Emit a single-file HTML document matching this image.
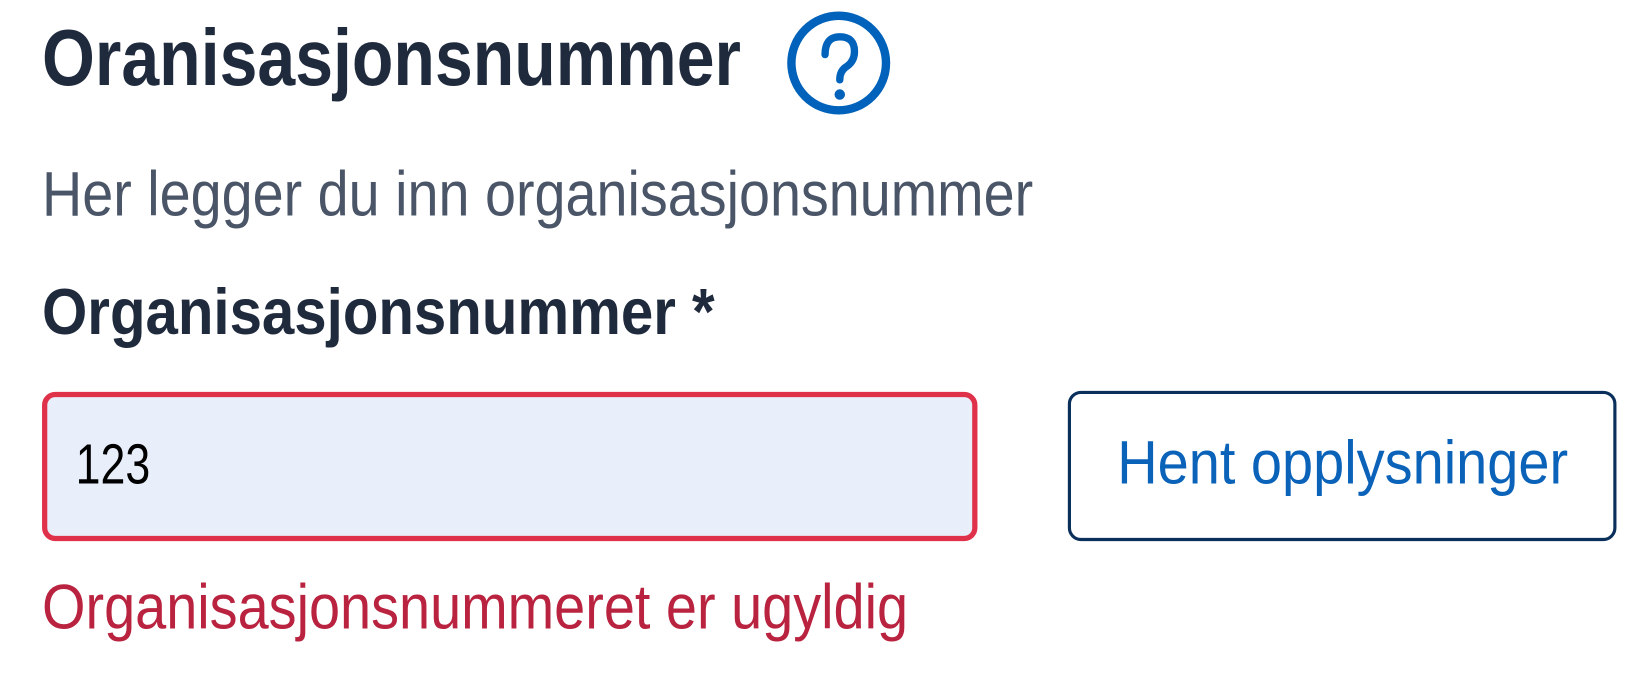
<!DOCTYPE html>
<html><head><meta charset="utf-8"><style>
html,body{margin:0;padding:0;background:#fff;width:1648px;height:685px;overflow:hidden}
svg{display:block}
text{font-family:"Liberation Sans",sans-serif}
</style></head><body>
<svg width="1648" height="685" viewBox="0 0 1568 652" preserveAspectRatio="none" xmlns="http://www.w3.org/2000/svg">
<text x="40" y="81" font-size="76" font-weight="bold" fill="#1f2a3c" textLength="665" lengthAdjust="spacingAndGlyphs">Oranisasjonsnummer</text>
<circle cx="798" cy="60" r="45" fill="none" stroke="#0062ba" stroke-width="8"/>
<path d="M785 52 Q785 35 799 35 Q813 35 813 49 Q813 58 806 63 Q799 67 799 76" fill="none" stroke="#0062ba" stroke-width="7" stroke-linecap="round"/>
<circle cx="799" cy="90" r="5" fill="#0062ba"/>
<text x="40" y="205" font-size="60" fill="#4a5568" textLength="943" lengthAdjust="spacingAndGlyphs">Her legger du inn organisasjonsnummer</text>
<text x="40" y="318" font-size="62" font-weight="bold" fill="#1f2a3c" textLength="640" lengthAdjust="spacingAndGlyphs">Organisasjonsnummer *</text>
<rect x="42.5" y="375.5" width="885" height="137" rx="10" fill="#e8effb" stroke="#e0314b" stroke-width="5"/>
<text x="72" y="460" font-size="54" fill="#000" textLength="71" lengthAdjust="spacingAndGlyphs">123</text>
<rect x="1017.5" y="373.5" width="519" height="140" rx="11" fill="#fff" stroke="#0a2f5a" stroke-width="3"/>
<text x="1063" y="460" font-size="58" fill="#0a62b9" textLength="429" lengthAdjust="spacingAndGlyphs">Hent opplysninger</text>
<text x="40" y="598" font-size="60" fill="#b9233f" textLength="824" lengthAdjust="spacingAndGlyphs">Organisasjonsnummeret er ugyldig</text>
</svg>
</body></html>
